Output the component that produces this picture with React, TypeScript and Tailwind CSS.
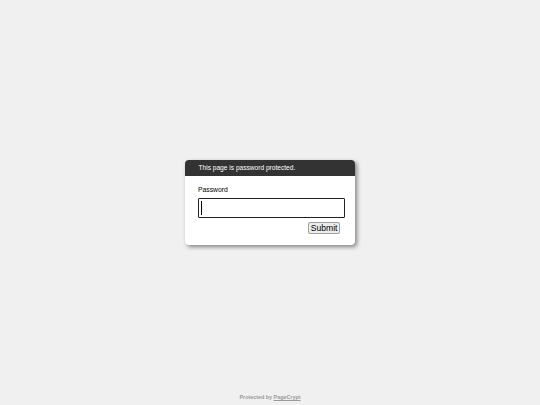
export default function App() {
  return (
    <div className="relative h-[405px] w-full bg-[#f0f0f0] font-['Liberation_Sans',Arial,sans-serif]">
      <div className="flex h-full items-center justify-center">
        <div className="w-[170px] overflow-hidden rounded-[4px] bg-white shadow-[2px_2px_4px_rgba(0,0,0,0.45)]">
          <div className="flex h-[16px] items-center bg-[#333333] px-[13.5px] text-[6.6px] text-white">
            This page is password protected.
          </div>
          <div className="px-[13px] pb-[11px] pt-[9px]">
            <div className="text-[6.8px] leading-[9px] text-black">Password</div>
            <div className="mt-[4px] flex h-[20px] w-[147px] items-center rounded-[1px] border border-[#222] px-[2px]">
              <div className="h-[14px] w-px bg-black" />
            </div>
            <div className="mt-[4px] flex justify-end pr-[2px]">
              <button className="h-[12px] rounded-[2px] border border-[#a0a0a0] bg-[#ececec] px-[1.5px] text-[8.6px] leading-[10px] text-black">
                Submit
              </button>
            </div>
          </div>
        </div>
      </div>
      <div className="absolute bottom-[4px] left-0 right-0 text-center text-[5.4px] font-bold text-[#9a9a9a]">
        Protected by <span className="underline">PageCrypt</span>
      </div>
    </div>
  );
}
